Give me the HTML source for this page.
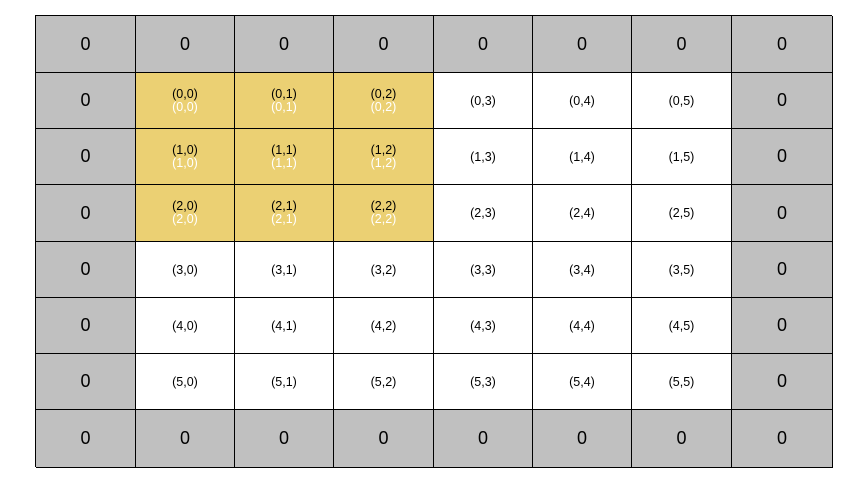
<!DOCTYPE html>
<html><head><style>
body{margin:0;width:866px;height:484px;background:#fff;position:relative;font-family:"Liberation Sans",sans-serif;}
.c{position:absolute;box-sizing:border-box;border-right:1px solid #000;border-bottom:1px solid #000;display:flex;flex-direction:column;align-items:center;justify-content:center;color:#000;}
.g{background:#c0c0c0;font-size:18px;}
.w{background:#fff;font-size:12.5px;}
.y{background:#ebd073;font-size:12.5px;line-height:13px;}
.y span{color:#fff;}
#grid{position:absolute;left:35px;top:15px;width:797px;height:452px;border-left:1px solid #000;border-top:1px solid #000;box-sizing:border-box;}
</style></head><body>
<div id="grid"></div>
<script>
var xs=[35,135,234,333,433,532,631,731,832],ys=[15,72,128,184,241,297,353,409,467],h='';
for(var r=0;r<8;r++)for(var c=0;c<8;c++){
var st='left:'+(xs[c]+1)+'px;top:'+(ys[r]+1)+'px;width:'+(xs[c+1]-xs[c])+'px;height:'+(ys[r+1]-ys[r])+'px;';
if(r==0||r==7||c==0||c==7)h+='<div class="c g" style="'+st+'">0</div>';
else{var t='('+(r-1)+','+(c-1)+')';
if(r<=3&&c<=3)h+='<div class="c y" style="'+st+'"><div>'+t+'</div><span>'+t+'</span></div>';
else h+='<div class="c w" style="'+st+'">'+t+'</div>';}}
document.getElementById('grid').insertAdjacentHTML('afterend',h);
</script>
</body></html>
